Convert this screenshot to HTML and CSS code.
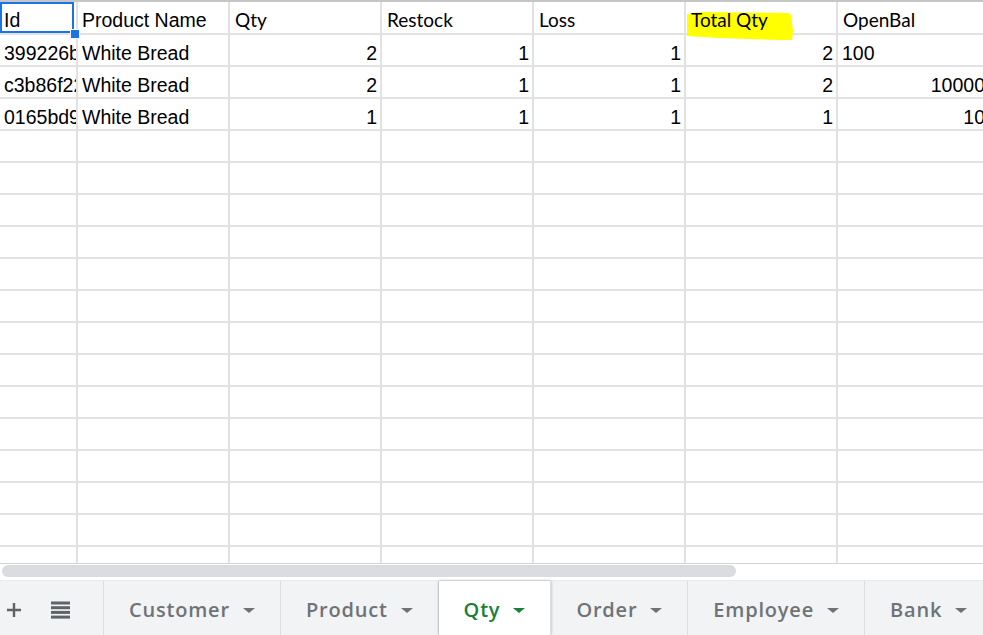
FILE: index.html
```html
<!DOCTYPE html>
<html>
<head>
<meta charset="utf-8">
<link rel="stylesheet" href="styles.css">
</head>
<body>
<div class="sheet">
  <div class="grid">
    <div class="cell head sel">Id<span class="handle"></span></div>
    <div class="cell head">Product Name</div>
    <div class="cell head cal">Qty</div>
    <div class="cell head cal">Restock</div>
    <div class="cell head cal">Loss</div>
    <div class="cell head cal hl"><svg class="mark" width="120" height="40" viewBox="0 0 120 40"><polygon points="1,3 14,1 102,2 105,4 107,20 106,29 94,29 34,27 1,25" fill="#ffff00"/></svg><span class="txt">Total Qty</span></div>
    <div class="cell head cal">OpenBal</div>

    <div class="cell">399226b7</div>
    <div class="cell">White Bread</div>
    <div class="cell num">2</div>
    <div class="cell num">1</div>
    <div class="cell num">1</div>
    <div class="cell num">2</div>
    <div class="cell">100</div>

    <div class="cell">c3b86f22</div>
    <div class="cell">White Bread</div>
    <div class="cell num">2</div>
    <div class="cell num">1</div>
    <div class="cell num">1</div>
    <div class="cell num">2</div>
    <div class="cell num">10000</div>

    <div class="cell">0165bd93</div>
    <div class="cell">White Bread</div>
    <div class="cell num">1</div>
    <div class="cell num">1</div>
    <div class="cell num">1</div>
    <div class="cell num">1</div>
    <div class="cell num">10</div>
  </div>
  <div class="empty-rows"></div>
  <div class="hscroll"><div class="thumb"></div></div>
  <div class="tabbar">
    <div class="tools">
      <svg class="plus" width="16" height="16" viewBox="0 0 16 16"><path d="M6.8 1h2.4v5.8H15v2.4H9.2V15H6.8V9.2H1V6.8h5.8z" fill="#5f6368"/></svg>
      <svg class="list" width="19" height="18" viewBox="0 0 19 18"><rect x="0" y="0.5" width="19" height="3" fill="#5f6368"/><rect x="0" y="5.2" width="19" height="3" fill="#5f6368"/><rect x="0" y="9.9" width="19" height="3" fill="#5f6368"/><rect x="0" y="14.6" width="19" height="3" fill="#5f6368"/></svg>
    </div>
    <div class="tab">Customer<span class="arrow"></span></div>
    <div class="tab">Product<span class="arrow"></span></div>
    <div class="tab active">Qty<span class="arrow"></span></div>
    <div class="tab">Order<span class="arrow"></span></div>
    <div class="tab">Employee<span class="arrow"></span></div>
    <div class="tab">Bank<span class="arrow"></span></div>
  </div>
</div>
</body>
</html>
```

FILE: styles.css
```css
html, body {
  margin: 0;
  padding: 0;
  background: #ffffff;
}
body {
  width: 983px;
  height: 635px;
  overflow: hidden;
  font-family: "Liberation Sans", Arial, sans-serif;
}
.sheet {
  width: 983px;
  height: 635px;
  overflow: hidden;
  display: flex;
  flex-direction: column;
}
.grid {
  display: grid;
  grid-template-columns: 78px repeat(6, 152px);
  grid-template-rows: 33px repeat(3, 32px);
  border-top: 2px solid #c6c6c6;
  width: 990px;
  flex: none;
}
.cell {
  box-sizing: border-box;
  border-right: 2px solid #e2e2e2;
  border-bottom: 2px solid #e2e2e2;
  padding: 0 4px 1px 4px;
  display: flex;
  align-items: flex-end;
  font-size: 19.5px;
  line-height: 22px;
  color: #000;
  white-space: nowrap;
  overflow: hidden;
  position: relative;
}
.cell.num {
  justify-content: flex-end;
  padding-right: 3px;
}
.cell.head {
  padding-bottom: 2px;
}
.cell.cal {
  font-family: Lato, "Open Sans", sans-serif;
  font-size: 19px;
  padding-left: 5px;
}
.cell.sel {
  overflow: visible;
  z-index: 2;
}
.cell.sel::before {
  content: "";
  position: absolute;
  left: 0;
  top: 0;
  width: 74px;
  height: 31px;
  border: 2px solid #1a73e8;
  box-sizing: border-box;
}
.handle {
  position: absolute;
  left: 71px;
  top: 28px;
  width: 8px;
  height: 8px;
  background: #1a73e8;
  box-shadow: 0 0 0 1px #fff;
}
.cell.hl {
  overflow: visible;
  z-index: 1;
}
.mark {
  position: absolute;
  left: 0;
  top: 9px;
}
.txt {
  position: relative;
}
.empty-rows {
  flex: none;
  height: 432px;
  width: 990px;
  background-image:
    linear-gradient(to bottom, transparent 30px, #e2e2e2 30px, #e2e2e2 32px),
    linear-gradient(to right, transparent 76px, #e2e2e2 76px, #e2e2e2 78px, transparent 78px),
    linear-gradient(to right, transparent 150px, #e2e2e2 150px, #e2e2e2 152px);
  background-size: 100% 32px, 78px 100%, 152px 100%;
  background-position: 0 0, 0 0, 78px 0;
  background-repeat: repeat-y, no-repeat, repeat-x;
}
.hscroll {
  flex: none;
  height: 17px;
  box-sizing: border-box;
  border-top: 1px solid #d4d4d4;
  padding: 1px 0 0 2px;
  background: #fff;
}
.thumb {
  width: 734px;
  height: 12px;
  border-radius: 6px;
  background: #dadce0;
}
.tabbar {
  flex: 1;
  display: flex;
  align-items: stretch;
  background: #f1f3f4;
  border-top: 1px solid #e8eaed;
  font-family: "Open Sans", Roboto, sans-serif;
  font-weight: 600;
  font-size: 20px;
  letter-spacing: 0.8px;
  color: #6f7377;
}
.tools {
  flex: none;
  width: 104px;
  display: flex;
  align-items: center;
  padding-top: 4px;
  box-sizing: border-box;
  border-right: 1px solid #dadce0;
}
.plus {
  margin-left: 6px;
}
.list {
  margin-left: 29px;
}
.tab {
  flex: none;
  display: flex;
  align-items: center;
  padding: 2px 25px 0 25px;
  border-right: 1px solid #dadce0;
  white-space: nowrap;
}
.arrow {
  display: inline-block;
  width: 0;
  height: 0;
  margin-left: 13px;
  margin-top: 2px;
  border-left: 6px solid transparent;
  border-right: 6px solid transparent;
  border-top: 5px solid #6f7377;
}
.tab.active {
  background: #fff;
  color: #188038;
  box-shadow: 0 0 3px rgba(60, 64, 67, 0.35);
  position: relative;
  z-index: 1;
}
.tab.active .arrow {
  border-top-color: #188038;
}
```
